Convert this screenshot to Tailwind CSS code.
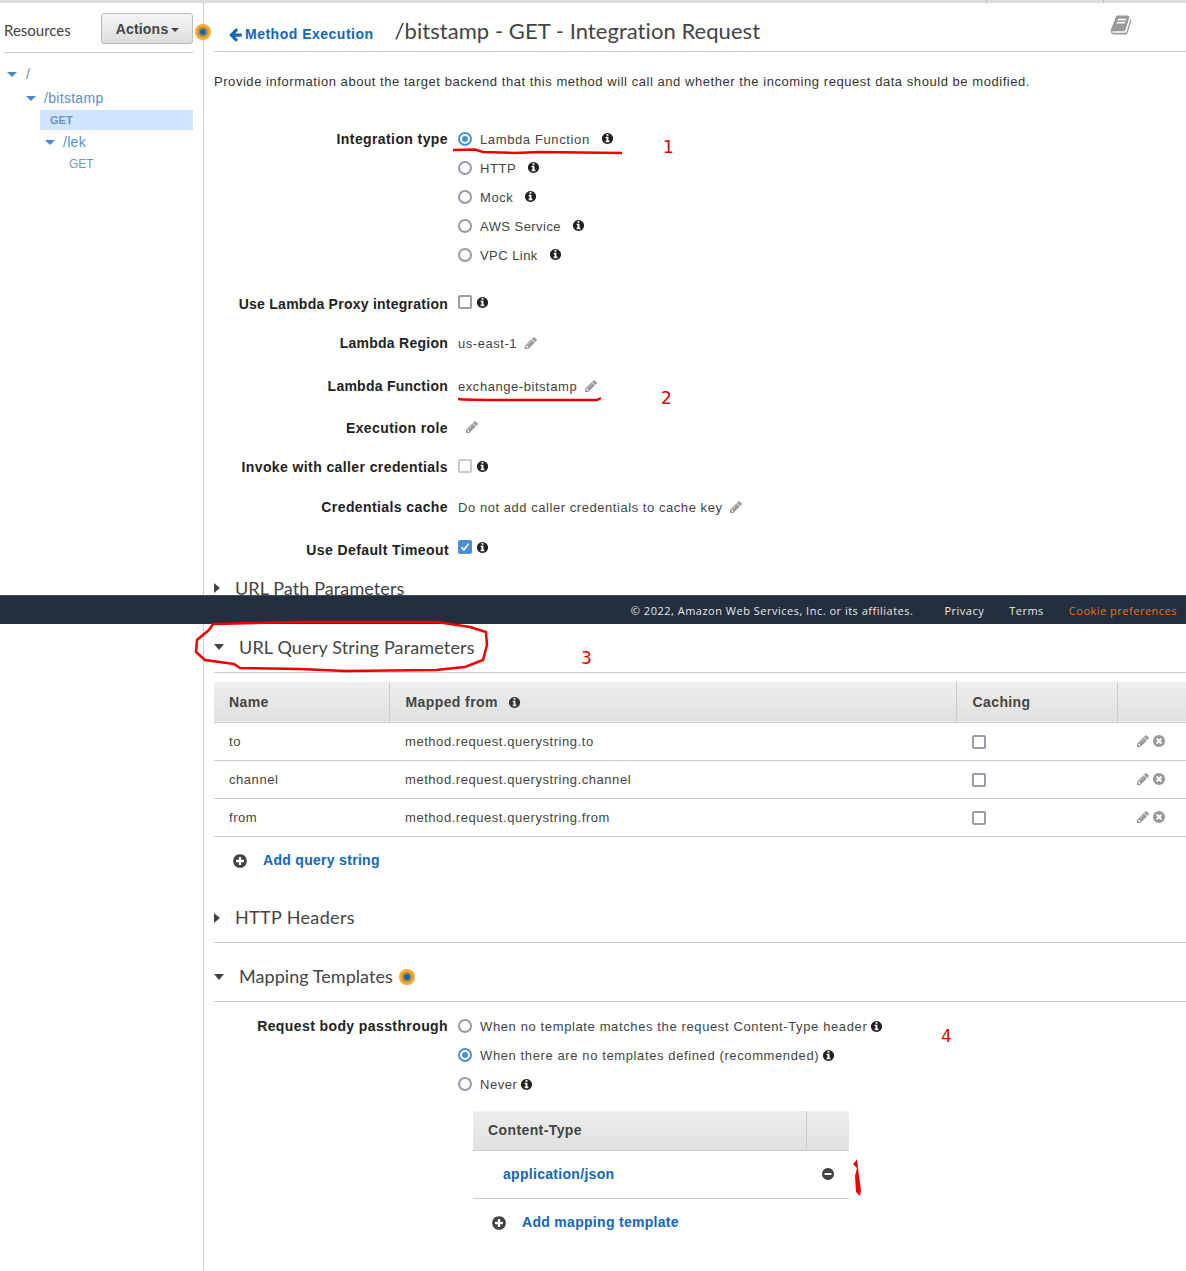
<!DOCTYPE html>
<html lang="en">
<head>
  <meta charset="UTF-8" />
  <title>/bitstamp - GET - Integration Request</title>
  <script src="https://cdn.jsdelivr.net/npm/@tailwindcss/browser@4"></script>
</head>
<body class="relative h-[1271px] overflow-hidden bg-white font-['Liberation_Sans',sans-serif] text-[13px] tracking-[0.55px] text-[#444]">
  <svg class="hidden">
    <symbol id="info" viewBox="0 0 1792 1792"><path fill="currentColor" d="M1152 1376v-160q0-14-9-23t-23-9h-96v-512q0-14-9-23t-23-9h-320q-14 0-23 9t-9 23v160q0 14 9 23t23 9h96v320h-96q-14 0-23 9t-9 23v160q0 14 9 23t23 9h448q14 0 23-9t9-23zm-128-896v-160q0-14-9-23t-23-9h-192q-14 0-23 9t-9 23v160q0 14 9 23t23 9h192q14 0 23-9t9-23zm640 416q0 209-103 385.5t-279.5 279.5-385.5 103-385.5-103-279.5-279.5-103-385.5 103-385.5 279.5-279.5 385.5-103 385.5 103 279.5 279.5 103 385.5z"/></symbol>
    <symbol id="pencil" viewBox="0 0 1792 1792"><path fill="currentColor" d="M491 1536l91-91-235-235-91 91v107h128v128h107zm523-928q0-22-22-22-10 0-17 7l-542 542q-7 7-7 17 0 22 22 22 10 0 17-7l542-542q7-7 7-17zm-54-192l416 416-832 832h-416v-416zm683 96q0 53-37 90l-166 166-416-416 166-165q36-38 90-38 53 0 91 38l235 234q37 39 37 91z"/></symbol>
    <symbol id="times" viewBox="0 0 1792 1792"><path fill="currentColor" d="M1149 1122q0-26-19-45l-181-181 181-181q19-19 19-45 0-27-19-46l-90-90q-19-19-46-19-26 0-45 19l-181 181-181-181q-19-19-45-19-27 0-46 19l-90 90q-19 19-19 46 0 26 19 45l181 181-181 181q-19 19-19 45 0 27 19 46l90 90q19 19 46 19 26 0 45-19l181-181 181 181q19 19 45 19 27 0 46-19l90-90q19-19 19-46zm387-226q0 209-103 385.5t-279.5 279.5-385.5 103-385.5-103-279.5-279.5-103-385.5 103-385.5 279.5-279.5 385.5-103 385.5 103 279.5 279.5 103 385.5z"/></symbol>
    <symbol id="plus" viewBox="0 0 1792 1792"><path fill="currentColor" d="M1344 960v-128q0-26-19-45t-45-19h-256v-256q0-26-19-45t-45-19h-128q-26 0-45 19t-19 45v256h-256q-26 0-45 19t-19 45v128q0 26 19 45t45 19h256v256q0 26 19 45t45 19h128q26 0 45-19t19-45v-256h256q26 0 45-19t19-45zm320-64q0 209-103 385.5t-279.5 279.5-385.5 103-385.5-103-279.5-279.5-103-385.5 103-385.5 279.5-279.5 385.5-103 385.5 103 279.5 279.5 103 385.5z"/></symbol>
    <symbol id="minus" viewBox="0 0 1792 1792"><path fill="currentColor" d="M1344 960v-128q0-26-19-45t-45-19h-768q-26 0-45 19t-19 45v128q0 26 19 45t45 19h768q26 0 45-19t19-45zm320-64q0 209-103 385.5t-279.5 279.5-385.5 103-385.5-103-279.5-279.5-103-385.5 103-385.5 279.5-279.5 385.5-103 385.5 103 279.5 279.5 103 385.5z"/></symbol>
    <symbol id="arrow" viewBox="0 0 1792 1792"><path fill="currentColor" d="M1664 896v128q0 53-32.5 90.5t-84.5 37.5h-704l293 294q38 36 38 90t-38 90l-75 76q-37 37-90 37-52 0-91-37l-651-652q-37-37-37-90 0-52 37-91l651-650q38-38 91-38 52 0 90 38l75 74q38 38 38 91t-38 91l-293 293h704q52 0 84.5 37.5t32.5 90.5z"/></symbol>
    <symbol id="book" viewBox="0 0 1792 1792"><path fill="currentColor" d="M1703 478q40 57 18 129l-275 906q-19 64-76.5 107.5t-122.5 43.5h-923q-77 0-148.5-53.5t-99.5-131.5q-24-67-2-127 0-4 3-27t4-37q1-8-3-21.5t-3-19.5q2-11 8-21t16.5-23.5 16.5-23.5q23-38 45-91.5t30-91.5q3-10 .5-30t-.5-28q3-11 17-28t17-23q21-36 42-92t25-90q1-9-2.5-32t.5-28q4-13 22-30.5t22-22.5q19-26 42.5-84.5t27.5-96.5q1-8-3-25.5t-2-26.5q2-8 9-18t18-23 17-21q8-12 16.5-30.5t15-35 16-36 19.5-32 26.5-23.5 36-11.5 47.5 5.5l-1 3q38-9 51-9h761q74 0 114 56t18 130l-274 906q-36 119-71.5 153.5t-128.5 34.5h-869q-27 0-38 15-11 16-1 43 24 70 144 70h923q29 0 56-15.5t35-41.5l300-987q7-22 5-57 38 15 59 43zm-1064 2q-4 13 2 22.5t20 9.5h608q13 0 25.5-9.5t16.5-22.5l21-64q4-13-2-22.5t-20-9.5h-608q-13 0-25.5 9.5t-16.5 22.5zm-83 256q-4 13 2 22.5t20 9.5h608q13 0 25.5-9.5t16.5-22.5l21-64q4-13-2-22.5t-20-9.5h-608q-13 0-25.5 9.5t-16.5 22.5z"/></symbol>
  </svg>

  <!-- top strip of the console nav -->
  <div class="flex h-[3px] bg-[#dddddd]">
    <div class="ml-[986px] h-full w-px bg-[#bbbbbb]"></div>
    <div class="ml-[116px] h-full w-px bg-[#bbbbbb]"></div>
  </div>

  <!-- upper part, cut off by the footer -->
  <div class="flex h-[592px] overflow-hidden">
    <aside class="w-[204px] shrink-0 border-r border-[#cccccc] pl-1 pr-[10px]">
      <div class="flex h-[50px] items-center justify-between border-b border-[#cccccc] pb-[2px] pt-[8px]">
        <span class="font-['Lato',sans-serif] text-[15px] tracking-normal text-[#444]">Resources</span>
        <button class="-mt-[4px] flex h-[31px] w-[92px] items-center justify-center gap-[3px] rounded-[3px] border border-[#bbbbbb] bg-gradient-to-b from-[#f5f5f5] to-[#dddddd] pl-px pt-[2px] text-[14px] font-bold tracking-[0.2px] text-[#444]">Actions<span class="h-0 w-0 border-x-[4px] border-t-[4px] border-x-transparent border-t-[#444]"></span></button>
      </div>
      <div class="text-[14px] tracking-[0.3px] text-[#5a8fcb]">
        <div class="mt-[10px] flex h-[22px] items-center pl-[3px]"><span class="h-0 w-0 border-x-[5px] border-t-[5px] border-x-transparent border-t-[#4a86c8]"></span><span class="ml-[9px]">/</span></div>
        <div class="mt-[2px] flex h-[22px] items-center pl-[22px]"><span class="h-0 w-0 border-x-[5px] border-t-[5px] border-x-transparent border-t-[#4a86c8]"></span><span class="ml-[8px]">/bitstamp</span></div>
        <div class="ml-[36px] mt-px flex h-[20px] items-center bg-[#cee5fd] pl-[10px] text-[11px] font-bold tracking-normal text-[#6c94c4]">GET</div>
        <div class="mt-px flex h-[22px] items-center pl-[41px]"><span class="h-0 w-0 border-x-[5px] border-t-[5px] border-x-transparent border-t-[#4a86c8]"></span><span class="ml-[8px]">/lek</span></div>
        <div class="flex h-[22px] items-center pl-[65px] text-[12px] tracking-normal text-[#6c94c4]">GET</div>
      </div>
    </aside>

    <main class="min-w-0 flex-1 pl-[10px]">
      <header class="flex h-[49px] items-center border-b border-[#cccccc] pt-[10px]">
        <svg class="ml-[14px] mt-[5px] h-[15px] w-[15px] text-[#1166bb]"><use href="#arrow"/></svg>
        <a class="ml-[2px] mt-[5px] text-[14px] font-bold tracking-[0.5px] text-[#1166bb]">Method Execution</a>
        <h1 class="ml-[21px] -mt-[4px] font-['Lato',sans-serif] text-[22px] tracking-[0.05px] text-[#444]">/bitstamp - GET - Integration Request</h1>
        <svg class="ml-auto mr-[54px] -mt-[14px] h-[22px] w-[22px] text-[#999999]"><use href="#book"/></svg>
      </header>
      <p class="mt-[19px] flex h-[20px] items-center pt-[2px] text-[#333]">Provide information about the target backend that this method will call and whether the incoming request data should be modified.</p>

      <div class="mt-[34px] flex">
        <div class="flex h-[29px] w-[234px] items-center justify-end text-[14px] font-bold tracking-[0.4px] text-[#222]">Integration type</div>
        <div class="ml-[10px] -mt-px">
          <div class="flex h-[29px] items-center"><span class="flex h-[14px] w-[14px] items-center justify-center rounded-full border-2 border-[#4a90d9]"><span class="h-[6px] w-[6px] rounded-full bg-[#4a90d9]"></span></span><span class="ml-[8px] pt-[2px] tracking-[0.62px]">Lambda Function</span><svg class="ml-[11px] h-[13px] w-[13px] text-[#222]"><use href="#info"/></svg></div>
          <div class="flex h-[29px] items-center"><span class="h-[14px] w-[14px] rounded-full border-2 border-[#9a9aa8]"></span><span class="ml-[8px] pt-[2px]">HTTP</span><svg class="ml-[11px] h-[13px] w-[13px] text-[#222]"><use href="#info"/></svg></div>
          <div class="flex h-[29px] items-center"><span class="h-[14px] w-[14px] rounded-full border-2 border-[#9a9aa8]"></span><span class="ml-[8px] pt-[2px]">Mock</span><svg class="ml-[11px] h-[13px] w-[13px] text-[#222]"><use href="#info"/></svg></div>
          <div class="flex h-[29px] items-center"><span class="h-[14px] w-[14px] rounded-full border-2 border-[#9a9aa8]"></span><span class="ml-[8px] pt-[2px] tracking-[0.45px]">AWS Service</span><svg class="ml-[11px] h-[13px] w-[13px] text-[#222]"><use href="#info"/></svg></div>
          <div class="flex h-[29px] items-center"><span class="h-[14px] w-[14px] rounded-full border-2 border-[#9a9aa8]"></span><span class="ml-[8px] pt-[2px] tracking-[0.45px]">VPC Link</span><svg class="ml-[11px] h-[13px] w-[13px] text-[#222]"><use href="#info"/></svg></div>
        </div>
      </div>

      <div class="mt-[25px] flex h-[20px] items-center">
        <div class="w-[234px] text-right text-[14px] font-bold tracking-[0.25px] text-[#222]">Use Lambda Proxy integration</div>
        <span class="ml-[10px] -mt-[4px] h-[14px] w-[14px] rounded-[2px] border-2 border-[#9a9aa8]"></span>
        <svg class="ml-[4px] -mt-[4px] h-[13px] w-[13px] text-[#222]"><use href="#info"/></svg>
      </div>
      <div class="mt-[19px] flex h-[20px] items-center">
        <div class="w-[234px] text-right text-[14px] font-bold tracking-[0.25px] text-[#222]">Lambda Region</div>
        <span class="ml-[10px] pt-[2px]">us-east-1</span>
        <svg class="ml-[7px] h-[14px] w-[14px] text-[#999999]"><use href="#pencil"/></svg>
      </div>
      <div class="mt-[23px] flex h-[20px] items-center">
        <div class="w-[234px] text-right text-[14px] font-bold tracking-[0.25px] text-[#222]">Lambda Function</div>
        <span class="ml-[10px] pt-[2px]">exchange-bitstamp</span>
        <svg class="ml-[7px] h-[14px] w-[14px] text-[#999999]"><use href="#pencil"/></svg>
      </div>
      <div class="mt-[22px] flex h-[20px] items-center">
        <div class="w-[234px] text-right text-[14px] font-bold tracking-[0.4px] text-[#222]">Execution role</div>
        <svg class="ml-[17px] -mt-[2px] h-[14px] w-[14px] text-[#999999]"><use href="#pencil"/></svg>
      </div>
      <div class="mt-[19px] flex h-[20px] items-center">
        <div class="w-[234px] text-right text-[14px] font-bold tracking-[0.4px] text-[#222]">Invoke with caller credentials</div>
        <span class="ml-[10px] -mt-[2px] h-[14px] w-[14px] rounded-[2px] border-2 border-[#c8c8d0]"></span>
        <svg class="ml-[4px] -mt-[2px] h-[13px] w-[13px] text-[#222]"><use href="#info"/></svg>
      </div>
      <div class="mt-[20px] flex h-[20px] items-center">
        <div class="w-[234px] text-right text-[14px] font-bold tracking-[0.4px] text-[#222]">Credentials cache</div>
        <span class="ml-[10px] pt-[2px]">Do not add caller credentials to cache key</span>
        <svg class="ml-[7px] h-[14px] w-[14px] text-[#999999]"><use href="#pencil"/></svg>
      </div>
      <div class="mt-[22px] flex h-[20px] items-center">
        <div class="w-[235px] pt-[2px] text-right text-[14px] font-bold tracking-[0.4px] text-[#222]">Use Default Timeout</div>
        <span class="ml-[9px] -mt-[4px] flex h-[14px] w-[14px] items-center justify-center rounded-[2px] bg-[#4a90d9]"><svg class="h-[10px] w-[10px] text-white" viewBox="0 0 10 10"><path d="M1.500 5.200 4 7.800 8.600 1.800" fill="none" stroke="currentColor" stroke-width="1.600"/></svg></span>
        <svg class="ml-[4px] -mt-[4px] h-[13px] w-[13px] text-[#222]"><use href="#info"/></svg>
      </div>
      <div class="mt-[17px] flex h-[24px] items-center font-['Lato',sans-serif] text-[18px] tracking-[0.1px] text-[#444]">
        <span class="h-0 w-0 border-y-[5px] border-l-[6px] border-y-transparent border-l-[#444]"></span>
        <span class="ml-[15px]">URL Path Parameters</span>
      </div>
    </main>
  </div>

  <footer class="flex h-[29px] items-center border-t border-[#3f4b5a] bg-[#232f3e] pr-[9px] pt-[2px] font-['Open_Sans',sans-serif] text-[11px] tracking-[0.5px] text-[#e8e8e8]">
    <span class="ml-auto">© 2022, Amazon Web Services, Inc. or its affiliates.</span>
    <a class="ml-[31px]">Privacy</a>
    <a class="ml-[25px]">Terms</a>
    <a class="ml-[25px] text-[#ec7211]">Cookie preferences</a>
  </footer>

  <!-- lower part -->
  <div class="flex h-[647px]">
    <div class="w-[204px] shrink-0 border-r border-[#cccccc]"></div>
    <main class="min-w-0 flex-1 pl-[10px]">
      <div class="flex h-[49px] items-center border-b border-[#cccccc] pb-[2px]">
        <span class="h-0 w-0 border-x-[5.5px] border-t-[6px] border-x-transparent border-t-[#444]"></span>
        <h2 class="ml-[15px] font-['Lato',sans-serif] text-[18px] tracking-[0.15px] text-[#444]">URL Query String Parameters</h2>
      </div>

      <table class="mt-[9px] w-full table-fixed border-collapse">
        <colgroup><col class="w-[175px]" /><col class="w-[567px]" /><col class="w-[161px]" /><col /></colgroup>
        <thead>
          <tr class="h-[40px] border-b border-[#cccccc] bg-gradient-to-b from-[#eeeeee] to-[#e0e0e0] text-left text-[14px] font-bold tracking-[0.4px] text-[#444]">
            <th class="border-r border-[#cccccc] pl-[15px] pt-[2px]">Name</th>
            <th class="border-r border-[#cccccc] pl-[16px] pt-[2px]"><span class="flex items-center">Mapped from<svg class="ml-[10px] h-[13px] w-[13px] text-[#333]"><use href="#info"/></svg></span></th>
            <th class="border-r border-[#cccccc] pl-[16px] pt-[2px]">Caching</th>
            <th></th>
          </tr>
        </thead>
        <tbody>
          <tr class="h-[38px] border-b border-[#cccccc]">
            <td class="pl-[15px] pt-[2px]">to</td>
            <td class="pl-[16px] pt-[2px]">method.request.querystring.to</td>
            <td class="pl-[16px] pt-[2px]"><span class="block h-[14px] w-[14px] rounded-[2px] border-2 border-[#9a9aa8]"></span></td>
            <td><span class="flex justify-end gap-[3px] pr-[19px] text-[#999999]"><svg class="h-[14px] w-[14px]"><use href="#pencil"/></svg><svg class="h-[14px] w-[14px]"><use href="#times"/></svg></span></td>
          </tr>
          <tr class="h-[38px] border-b border-[#cccccc]">
            <td class="pl-[15px] pt-[2px]">channel</td>
            <td class="pl-[16px] pt-[2px]">method.request.querystring.channel</td>
            <td class="pl-[16px] pt-[2px]"><span class="block h-[14px] w-[14px] rounded-[2px] border-2 border-[#9a9aa8]"></span></td>
            <td><span class="flex justify-end gap-[3px] pr-[19px] text-[#999999]"><svg class="h-[14px] w-[14px]"><use href="#pencil"/></svg><svg class="h-[14px] w-[14px]"><use href="#times"/></svg></span></td>
          </tr>
          <tr class="h-[38px] border-b border-[#cccccc]">
            <td class="pl-[15px] pt-[2px]">from</td>
            <td class="pl-[16px] pt-[2px]">method.request.querystring.from</td>
            <td class="pl-[16px] pt-[2px]"><span class="block h-[14px] w-[14px] rounded-[2px] border-2 border-[#9a9aa8]"></span></td>
            <td><span class="flex justify-end gap-[3px] pr-[19px] text-[#999999]"><svg class="h-[14px] w-[14px]"><use href="#pencil"/></svg><svg class="h-[14px] w-[14px]"><use href="#times"/></svg></span></td>
          </tr>
        </tbody>
      </table>

      <div class="mt-[14px] flex h-[20px] items-center pl-[18px]">
        <svg class="h-[16px] w-[16px] text-[#444]"><use href="#plus"/></svg>
        <a class="ml-[15px] text-[14px] font-bold tracking-[0.3px] text-[#1166bb]">Add query string</a>
      </div>

      <div class="mt-[23px] flex h-[49px] items-center border-b border-[#cccccc]">
        <span class="h-0 w-0 border-y-[5px] border-l-[6px] border-y-transparent border-l-[#444]"></span>
        <h2 class="ml-[15px] font-['Lato',sans-serif] text-[18px] tracking-[0.35px] text-[#444]">HTTP Headers</h2>
      </div>
      <div class="mt-[10px] flex h-[49px] items-center border-b border-[#cccccc]">
        <span class="h-0 w-0 border-x-[5.5px] border-t-[6px] border-x-transparent border-t-[#444]"></span>
        <h2 class="ml-[15px] font-['Lato',sans-serif] text-[18px] tracking-[0.05px] text-[#444]">Mapping Templates</h2>
        <span class="ml-[6px] h-[16px] w-[16px] rounded-full bg-[radial-gradient(circle,#1166bb_0_2.5px,#a88a40_3.5px_4.5px,#f9a72b_5.5px)]"></span>
      </div>

      <div class="mt-[10px] flex">
        <div class="flex h-[29px] w-[234px] items-center justify-end text-[14px] font-bold tracking-[0.4px] text-[#222]">Request body passthrough</div>
        <div class="ml-[10px]">
          <div class="flex h-[29px] items-center"><span class="h-[14px] w-[14px] rounded-full border-2 border-[#9a9aa8]"></span><span class="ml-[8px] pt-[2px] tracking-[0.62px]">When no template matches the request Content-Type header</span><svg class="ml-[3px] h-[13px] w-[13px] text-[#222]"><use href="#info"/></svg></div>
          <div class="flex h-[29px] items-center"><span class="flex h-[14px] w-[14px] items-center justify-center rounded-full border-2 border-[#4a90d9]"><span class="h-[6px] w-[6px] rounded-full bg-[#4a90d9]"></span></span><span class="ml-[8px] pt-[2px] tracking-[0.61px]">When there are no templates defined (recommended)</span><svg class="ml-[3px] h-[13px] w-[13px] text-[#222]"><use href="#info"/></svg></div>
          <div class="flex h-[29px] items-center"><span class="h-[14px] w-[14px] rounded-full border-2 border-[#9a9aa8]"></span><span class="ml-[8px] pt-[2px]">Never</span><svg class="ml-[3px] h-[13px] w-[13px] text-[#222]"><use href="#info"/></svg></div>
        </div>
      </div>

      <div class="ml-[259px] mt-[12px] w-[376px]">
        <div class="flex h-[40px] border-b border-[#cccccc] bg-gradient-to-b from-[#eeeeee] to-[#e0e0e0] text-[14px] font-bold tracking-[0.4px] text-[#444]">
          <div class="flex w-[334px] items-center border-r border-[#cccccc] pl-[15px]">Content-Type</div>
        </div>
        <div class="flex h-[48px] items-center border-b border-[#cccccc] pl-[30px] pr-[14px]">
          <a class="text-[14px] font-bold tracking-[0.3px] text-[#1166bb]">application/json</a>
          <svg class="ml-auto h-[14px] w-[14px] text-[#444]"><use href="#minus"/></svg>
        </div>
        <div class="mt-[14px] flex h-[20px] items-center pl-[18px]">
          <svg class="h-[16px] w-[16px] text-[#444]"><use href="#plus"/></svg>
          <a class="ml-[15px] text-[14px] font-bold tracking-[0.3px] text-[#1166bb]">Add mapping template</a>
        </div>
      </div>
    </main>
  </div>

  <!-- orange marker sitting on the sidebar divider -->
  <span class="absolute left-[195px] top-[24px] h-[16px] w-[16px] rounded-full bg-[radial-gradient(circle,#1166bb_0_2.5px,#a88a40_3.5px_4.5px,#f9a72b_5.5px)]"></span>

  <!-- hand drawn red annotations on top of the screenshot -->
  <svg class="pointer-events-none absolute left-0 top-0 h-[1271px] w-[1186px]" fill="none" stroke="#ee0000">
    <path stroke-width="2.500" d="M453 150 L475 149.500 L483 152 L515 153 L540 152 L622 153"/>
    <path stroke-width="2.500" d="M458 399 Q465 400 520 400 L597 400 L601 398"/>
    <path stroke-width="2.500" d="M213 624 L300 622 L437 622 L470 627 L486 632 L487 645 L483 660 L465 667 L436 670 L345 671 L300 669 L240 668 L234 664 L205 660 L196 652 L197 640 L209 630 Z"/>
    <path fill="#ee0000" stroke="none" d="M855 1162 L857 1159 L858 1168 L859 1176 L861 1190 L860 1196 L856 1192 L855 1176 L857 1168 L853 1164 Z"/>
  </svg>
  <span class="absolute left-[663px] top-[137px] font-['DejaVu_Sans',sans-serif] text-[17px] leading-[20px] tracking-normal text-[#e00000]">1</span>
  <span class="absolute left-[661px] top-[388px] font-['DejaVu_Sans',sans-serif] text-[17px] leading-[20px] tracking-normal text-[#e00000]">2</span>
  <span class="absolute left-[581px] top-[648px] font-['DejaVu_Sans',sans-serif] text-[17px] leading-[20px] tracking-normal text-[#e00000]">3</span>
  <span class="absolute left-[941px] top-[1026px] font-['DejaVu_Sans',sans-serif] text-[17px] leading-[20px] tracking-normal text-[#e00000]">4</span>
</body>
</html>
